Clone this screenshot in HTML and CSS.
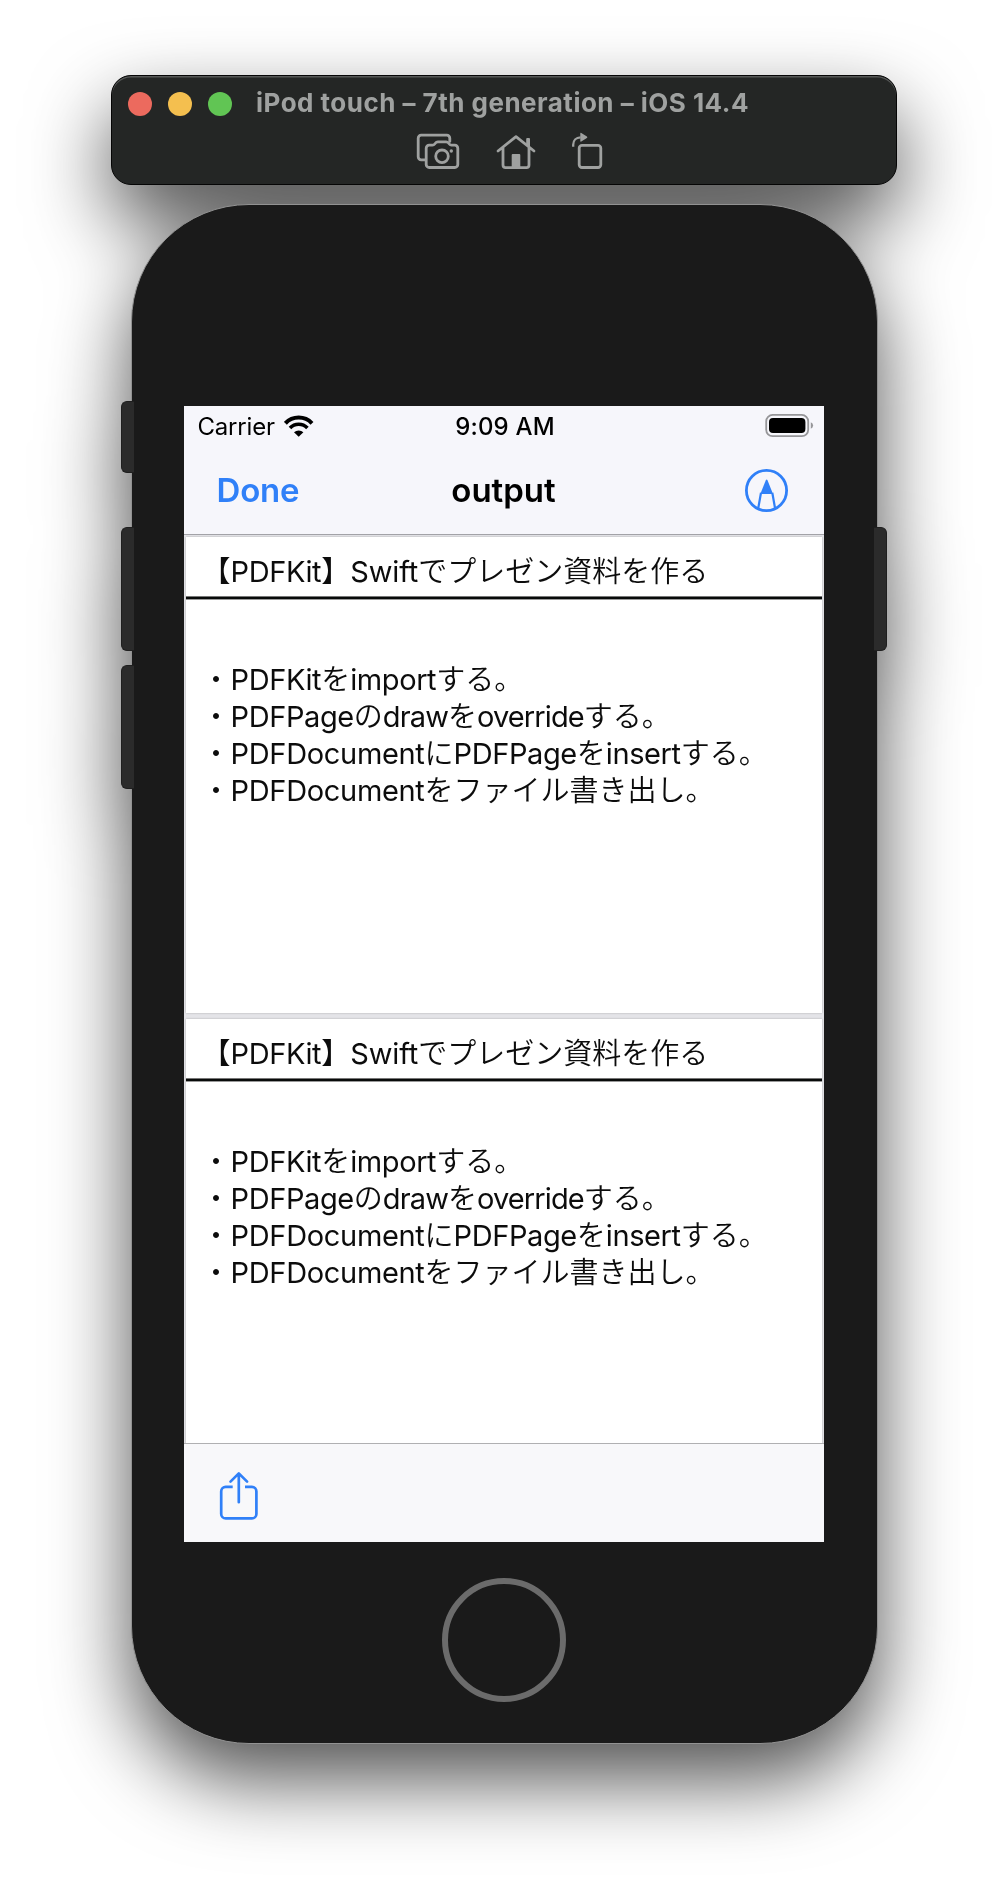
FILE: index.html
```html
<!DOCTYPE html>
<html lang="ja">
<head>
<meta charset="utf-8">
<title>iPod touch – 7th generation – iOS 14.4</title>
<link rel="stylesheet" href="styles.css">
</head>
<body>
<main class="simulator">
  <header class="window-bar">
    <div class="title-row">
      <i class="light close"></i><i class="light minimize"></i><i class="light expand"></i>
      <h1 class="window-title">iPod touch – 7th generation – iOS 14.4</h1>
    </div>
    <div class="tools">
      <svg class="tool-camera" width="44" height="38" viewBox="0 0 44 38" fill="none" stroke="currentColor" stroke-width="2.8" stroke-linecap="round">
        <path d="M9 26.8H5.2a3 3 0 0 1-3-3V5.2a3 3 0 0 1 3-3H30.8a3 3 0 0 1 3 3V8.4"/>
        <path d="M13.2 12.2h3.3c1 0 1.6-.4 2.2-1.2l.8-1c.6-.8 1.3-1.2 2.3-1.2h8.4c1 0 1.7.4 2.3 1.2l.8 1c.6.8 1.2 1.2 2.2 1.2h3.3a3 3 0 0 1 3 3v16.3a3 3 0 0 1-3 3H13.2a3 3 0 0 1-3-3V15.2a3 3 0 0 1 3-3z"/>
        <circle cx="26" cy="23.3" r="6.3"/><circle cx="35.3" cy="18" r="1.7" fill="currentColor" stroke="none"/>
      </svg>
      <svg class="tool-home" width="40" height="38" viewBox="0 0 40 38" fill="none" stroke="currentColor" stroke-width="2.8" stroke-linecap="round" stroke-linejoin="round">
        <path d="M2 18 20 3.6 38 18M7 14.5V32a2.6 2.6 0 0 0 2.6 2.6h20.8A2.6 2.6 0 0 0 33 32V14.5"/>
        <path d="M30.2 6q0-1 1-1h1.8q1 0 1 1v9l-3.8-3zM15.7 22q0-1 1-1h6.6q1 0 1 1v13h-8.6z" fill="currentColor" stroke="none"/>
      </svg>
      <svg class="tool-rotate" width="33" height="38" viewBox="0 0 33 38" fill="none" stroke="currentColor" stroke-width="2.8">
        <rect x="8.2" y="13.3" width="21.6" height="22.2" rx="2.8"/>
        <path d="M2.2 14.8v-2C2.2 8.6 5 5.3 9.6 5.3" stroke-width="2.3"/>
        <path d="M9.3 1.4q0-1 1-.5l5.6 3.6q1 .7 0 1.5l-5.6 3.6q-1 .5-1-.5z" fill="currentColor" stroke="none"/>
      </svg>
    </div>
  </header>

  <div class="phone">
    <i class="key mute"></i><i class="key volume-up"></i><i class="key volume-down"></i><i class="key power"></i>
    <section class="screen">
      <div class="top-chrome">
        <div class="status">
          <div class="carrier">Carrier
            <svg width="30" height="22" viewBox="0 0 30 22" fill="none" stroke="#000" stroke-width="4">
              <path d="M1.4 8.3A18.4 18.4 0 0 1 28 8.3"/><path d="M6 13A12 12 0 0 1 23.4 13" stroke-width="3.6"/>
              <path d="M14.7 21.7 10 17.2A7 7 0 0 1 19.4 17.2Z" fill="#000" stroke="none"/>
            </svg>
          </div>
          <time class="clock">9:09 AM</time>
          <svg class="battery" width="49" height="24" viewBox="0 0 49 24">
            <rect x="1.2" y=".9" width="42" height="21.3" rx="6.4" fill="none" stroke="#969699" stroke-width="1.8"/>
            <rect x="4" y="4" width="36.4" height="15" rx="4"/>
            <path d="M45.8 8.3q2.3 1 2.3 3.2t-2.3 3.2z" fill="#969699"/>
          </svg>
        </div>
        <nav class="nav">
          <a class="done">Done</a>
          <h2 class="nav-title">output</h2>
          <svg class="markup" width="43" height="43" viewBox="0 0 43 43" fill="none" stroke="currentColor" stroke-width="2.8">
            <circle cx="21.5" cy="21.5" r="20.1"/>
            <path d="M16 23.7 13.2 39.5M27.3 23.7 30.1 39.5" stroke-width="2.2"/>
            <path d="M15.3 24.9 20.7 11.4q1-1.6 1.9 0L28 24.9z" fill="currentColor" stroke="none"/>
          </svg>
        </nav>
      </div>
      <div class="pages">
        <article class="page">
          <h3 class="heading">【<span>PDFKit</span>】<span class="swift">Swift</span>でプレゼン資料を作る</h3>
          <ul class="points">
            <li>・<span>PDFKit</span>を<span>import</span>する。</li>
            <li>・<span>PDFPage</span>の<span class="tight">draw</span>を<span class="tight">override</span>する。</li>
            <li>・<span class="loose">PDFDocument</span>に<span>PDFPage</span>を<span>insert</span>する。</li>
            <li>・<span class="loose">PDFDocument</span>をファイル書き出し。</li>
          </ul>
        </article>
        <article class="page">
          <h3 class="heading">【<span>PDFKit</span>】<span class="swift">Swift</span>でプレゼン資料を作る</h3>
          <ul class="points">
            <li>・<span>PDFKit</span>を<span>import</span>する。</li>
            <li>・<span>PDFPage</span>の<span class="tight">draw</span>を<span class="tight">override</span>する。</li>
            <li>・<span class="loose">PDFDocument</span>に<span>PDFPage</span>を<span>insert</span>する。</li>
            <li>・<span class="loose">PDFDocument</span>をファイル書き出し。</li>
          </ul>
        </article>
      </div>
      <footer class="toolbar">
        <svg width="40" height="50" viewBox="0 0 40 50" fill="none" stroke="currentColor" stroke-width="2.7">
          <path d="M13.7 15.9H6.7a4.5 4.5 0 0 0-4.5 4.5v22.5a4.5 4.5 0 0 0 4.5 4.5h26.2a4.5 4.5 0 0 0 4.5-4.5V20.4a4.5 4.5 0 0 0-4.5-4.5H26"/>
          <path d="M19.8 31.2V3M11.5 10.6 19.8 2.4 28.1 10.6" stroke-linecap="round" stroke-linejoin="round"/>
        </svg>
      </footer>
    </section>
    <div class="home-button"></div>
  </div>
</main>
</body>
</html>
```
FILE: styles.css
```css
* { box-sizing: border-box; }
body { margin: 0; background: #fff; font-family: Inter, "Noto Sans CJK JP", sans-serif; }
h1, h2, h3, ul { margin: 0; padding: 0; list-style: none; }
svg { display: block; flex: none; }

.simulator {
  width: 1008px;
  height: 1892px;
  padding-top: 75px;
  display: flex;
  flex-direction: column;
  align-items: center;
  gap: 19px;
  filter: drop-shadow(0 36px 40px rgba(0, 0, 0, .68));
}

/* window bar */
.window-bar {
  width: 786px;
  height: 110px;
  border: 1px solid #050505;
  border-radius: 20px;
  background: #242625;
  box-shadow: inset 0 1.5px 0 #565857;
  color: #9fa1a0;
}
.title-row { display: flex; align-items: center; gap: 16px; height: 57px; padding: 0 0 1px 16px; }
.light { width: 24px; height: 24px; border-radius: 50%; }
.close { background: #ec6a5e; }
.minimize { background: #f4bf4f; }
.expand { background: #61c554; }
.window-title {
  margin-left: 8px;
  padding-bottom: 3px;
  font-size: 26px;
  font-weight: 700;
  line-height: 32px;
  letter-spacing: .48px;
  white-space: nowrap;
}
.tools { display: flex; padding-left: 304px; }
.tool-home { margin-left: 36px; }
.tool-rotate { margin-left: 35px; margin-top: -1px; }

/* phone body */
.phone {
  position: relative;
  width: 747px;
  height: 1540px;
  padding: 201px 0 0 52px;
  border: 1px solid #929292;
  border-radius: 118px;
  background: #1a1a1a;
}
.key {
  position: absolute;
  width: 13px;
  background: #2b2b2b;
  border: 1px solid #1f1f1f;
}
.mute, .volume-up, .volume-down { left: -11px; border-right: 0; border-radius: 6px 0 0 6px; }
.mute { top: 196px; height: 72px; }
.volume-up { top: 322px; height: 124px; }
.volume-down { top: 460px; height: 124px; }
.power { right: -10px; top: 322px; height: 124px; border-left: 0; border-radius: 0 6px 6px 0; }
.home-button {
  width: 124px;
  height: 124px;
  margin: 36px 0 0 258px;
  border: 6px solid #6b6b6b;
  border-radius: 50%;
}

/* screen */
.screen { width: 640px; height: 1136px; display: flex; flex-direction: column; overflow: hidden; background: #e4e4e8; }
.top-chrome { height: 129px; flex: none; background: #f6f6fb; border-bottom: 1px solid #a2a2a7; }
.status { display: grid; grid-template-columns: 1fr auto 1fr; height: 40px; align-items: center; padding: 0 10px 0 13px; }
.carrier { display: flex; align-items: center; gap: 9px; padding-left: 1px; font-size: 24px; letter-spacing: -.2px; }
.clock { font-size: 24px; font-weight: 500; letter-spacing: .2px; }
.battery { justify-self: end; }
.nav { display: grid; grid-template-columns: 1fr auto 1fr; height: 88px; align-items: center; padding: 0 36px 0 33px; color: #3080f8; }
.done { font-size: 33px; font-weight: 600; letter-spacing: -.2px; }
.nav-title { padding-left: 3px; color: #000; font-size: 33px; font-weight: 600; }
.markup { justify-self: end; }

.pages { flex: 1; min-height: 0; padding: 2px 2px 0; display: flex; flex-direction: column; gap: 6px; overflow: hidden; }
.page { flex: none; height: 476px; background: #fff; color: #0c0c0c; font-size: 29px; box-shadow: 0 0 2px rgba(0, 0, 0, .25); }
.heading {
  height: 63px;
  padding: 13px 0 0 16px;
  background: linear-gradient(#777 1px, #080a09 1px 3px, #999 3px) bottom / 100% 4px no-repeat;
  font-size: 29px;
  font-weight: 350;
  line-height: 44px;
  white-space: nowrap;
}
.points { padding: 61px 0 0 16px; font-weight: 350; line-height: 37px; white-space: nowrap; }
.page span { font-weight: 400; letter-spacing: -.4px; }
.page .swift { letter-spacing: -.1px; }
.page .tight { letter-spacing: -.88px; }
.page .loose { letter-spacing: -.32px; }
.toolbar { flex: none; height: 99px; border-top: 1px solid #b0b0b2; background: #f8f8fa; padding: 27px 0 0 35px; color: #3080f8; }
```
